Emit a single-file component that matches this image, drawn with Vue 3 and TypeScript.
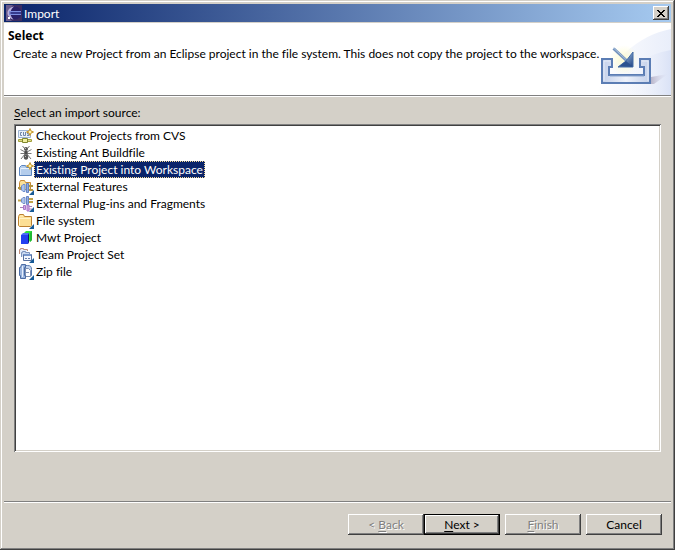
<script setup lang="ts">
import { ref } from 'vue'

interface ImportSource {
  id: string
  label: string
}

const sources: ImportSource[] = [
  { id: 'cvs', label: 'Checkout Projects from CVS' },
  { id: 'ant', label: 'Existing Ant Buildfile' },
  { id: 'project', label: 'Existing Project into Workspace' },
  { id: 'features', label: 'External Features' },
  { id: 'plugins', label: 'External Plug-ins and Fragments' },
  { id: 'folder', label: 'File system' },
  { id: 'mwt', label: 'Mwt Project' },
  { id: 'team', label: 'Team Project Set' },
  { id: 'zip', label: 'Zip file' },
]

const selected = ref('project')
</script>

<template>
  <main class="dialog">
    <header class="titlebar">
      <svg class="icon" viewBox="0 0 16 16" aria-hidden="true">
        <rect width="16" height="16" fill="#3b2d63" />
        <path d="M0 0h7L2 6v6l4 4H0z" fill="#6a5c8c" />
        <circle cx="9" cy="8" r="6.5" fill="#2a2168" />
        <path d="M8 1.500C4 2 1.500 5 1.500 8s2.500 6 6 6.500C5 12 4.500 10 4.500 8S5 4 8 1.500z" fill="#b9b0dc" />
        <path d="M3 6.500h12M3 9.500h12" stroke="#7d8fe0" />
        <path d="M3 8h12" stroke="#4557b4" />
        <path d="M2 12h2v2H2z" fill="#fff" />
      </svg>
      <h1>Import</h1>
      <button type="button" class="close" aria-label="Close">
        <svg viewBox="0 0 8 7" aria-hidden="true" shape-rendering="crispEdges">
          <path d="M0 0h2v1h1v1h2V1h1V0h2v1H7v1H6v1H5v1h1v1h1v1h1v1H6V6H5V5H3v1H2v1H0V6h1V5h1V4h1V3H2V2H1V1H0z" fill="#000" />
        </svg>
      </button>
    </header>

    <section class="banner">
      <div class="banner-text">
        <h2>Select</h2>
        <p>Create a new Project from an Eclipse project in the file system. This does not copy the project to the workspace.</p>
      </div>
      <svg class="banner-art" viewBox="0 0 75 72" aria-hidden="true">
        <defs>
          <linearGradient id="sky" x1="0" y1="0" x2="1" y2="0">
            <stop offset="0" stop-color="#fff" />
            <stop offset="1" stop-color="#e9eefa" />
          </linearGradient>
          <linearGradient id="sky2" x1="0" y1="0" x2="1" y2="0">
            <stop offset="0.200" stop-color="#fff" stop-opacity="0" />
            <stop offset="1" stop-color="#dae2f6" />
          </linearGradient>
          <linearGradient id="tray" x1="0" y1="0" x2="1" y2="0">
            <stop offset="0" stop-color="#c3d0ea" />
            <stop offset="0.500" stop-color="#eef2fb" />
            <stop offset="1" stop-color="#c3d0ea" />
          </linearGradient>
          <linearGradient id="head" x1="0" y1="0" x2="1" y2="1">
            <stop offset="0.300" stop-color="#8fb0d8" />
            <stop offset="1" stop-color="#1f4180" />
          </linearGradient>
          <radialGradient id="glow">
            <stop offset="0" stop-color="#fdfbd0" />
            <stop offset="1" stop-color="#fdfbd0" stop-opacity="0" />
          </radialGradient>
          <linearGradient id="shade" x1="0" y1="0" x2="1" y2="0">
            <stop offset="0" stop-color="#b9b5ca" />
            <stop offset="1" stop-color="#d9dbee" stop-opacity="0" />
          </linearGradient>
        </defs>
        <path d="M0 72C12 40 42 12 75 6v66z" fill="url(#sky)" />
        <path d="M14 72C26 46 50 31 75 27v45z" fill="url(#sky2)" />
        <path d="M55 54l17-3-14 10h-3z" fill="url(#shade)" />
        <circle cx="28" cy="37" r="15" fill="url(#glow)" />
        <path d="M6 36h10v8h-3v8h35v-8h-4v-8h10v24H6z" fill="url(#tray)" stroke="#5b7db4" stroke-width="2" />
        <path d="M8 38h6M46 38h6M8 38v20M52 38v20" stroke="#e5ecf8" fill="none" />
        <path d="M14 53h34" stroke="#8ba5cf" />
        <path d="M17.500 25.500L31 38" stroke="#7393be" stroke-width="3" />
        <path d="M17.500 25L30 36.500" stroke="#a7bedb" />
        <path d="M37 29v15H22l8-6z" fill="url(#head)" stroke="#456da6" />
        <path d="M36.500 43.500L30 38l-7 5.500z" fill="#2b528f" />
      </svg>
    </section>

    <section class="body">
      <h3 id="source-label"><u>S</u>elect an import source:</h3>
      <ul class="sources" aria-labelledby="source-label">
        <li v-for="source in sources" :key="source.id">
          <button
            type="button"
            class="source"
            :class="{ selected: source.id === selected }"
            :aria-pressed="source.id === selected"
            @click="selected = source.id"
          >
            <svg class="icon" viewBox="0 0 16 16" aria-hidden="true">
              <g v-if="source.id === 'cvs'">
                <path d="M.500 2.500h12v7H.500z" fill="#eaf1fa" stroke="#9db4d3" />
                <path d="M4 4.500H2.500v3H4M5.500 4v3.500h2V4M11 4.500H9.500V6H11v1.500H9" fill="none" stroke="#7187a8" />
                <path d="M.500 11.500h13v2H.500z" fill="#dcd98a" stroke="#a3a03c" />
                <path d="M4.500 10.500h5v4h-5z" fill="#f1efa0" stroke="#7f8730" />
              </g>
              <g v-else-if="source.id === 'ant'">
                <path d="M4.500 1l2 2.500M11.500 1l-2 2.500M2.500 4.500L7 7l1 1 1-1 4.500-2.500M2.500 8.500h11M3 14l4-5h2l4 5" fill="none" stroke="#777" />
                <circle cx="8" cy="4" r="2" fill="#555" />
                <circle cx="8" cy="7.500" r="1.700" fill="#4a4a4a" />
                <ellipse cx="8" cy="12" rx="2.200" ry="2.800" fill="#555" />
                <path d="M7 3.500h1M7 11.500h1" stroke="#bbb" />
              </g>
              <g v-else-if="source.id === 'project'">
                <path d="M1.500 13.500v-8l2-2h4l1 2h5v8z" fill="#b4cdec" stroke="#5c86c0" />
                <path d="M2.500 6.500h10" stroke="#e9f2fc" />
                <path d="M2.500 7v6" stroke="#d6e5f8" />
              </g>
              <g v-else-if="source.id === 'features'">
                <path d="M1.500 10.500v-7l1-2h4l1 2h5v7z" fill="#fbdf97" stroke="#c78a35" />
                <path d="M0 9h4M11 7h4M11 11h4" stroke="#b29542" stroke-width="2" />
                <path d="M7 5.500H5L3.500 7v4L5 12.500h2z" fill="#a9c2ec" stroke="#6f8ecb" />
                <path d="M8.500 4.500h2v9h-2z" fill="#8eaae0" stroke="#6483c2" />
              </g>
              <g v-else-if="source.id === 'plugins'">
                <path d="M0 4.500h4M11 3h4M11 6h4" stroke="#c0a34a" stroke-width="2" />
                <path d="M7 1.500H5L3.500 3v3L5 7.500h2z" fill="#a9c2ec" stroke="#7690c8" />
                <path d="M8.500.500h2v8h-2z" fill="#92aee2" stroke="#6885c4" />
                <path d="M2 11.500h3M11 10.500h3M11 13h3" stroke="#a97cba" />
                <path d="M5.500 9.500h2v4h-2zM9 9h2v6H9z" fill="#d3a9e2" stroke="#a877c8" />
              </g>
              <g v-else-if="source.id === 'folder'">
                <path d="M.500 12.500v-9l1-2h4l1 2h7v9l-1 1h-11z" fill="#fcdf94" stroke="#bd812f" />
                <path d="M1.500 5.500h11M1.500 5v7" stroke="#fff3c8" />
                <path d="M2 3h3" stroke="#fff0bd" />
              </g>
              <g v-else-if="source.id === 'mwt'">
                <path d="M6 3l2-2h6v9l-2 2z" fill="#2ee63c" />
                <path d="M14 1v9l-2 2V3z" fill="#22b834" />
                <path d="M3 5l2-2h6v9l-1 2H3z" fill="#4a6cf5" />
                <path d="M3 5h7v9H3z" fill="#2340f0" />
                <path d="M10 5l1-2v9l-1 2z" fill="#0c157a" />
              </g>
              <g v-else-if="source.id === 'team'">
                <path d="M1.500 7V2.500h1v-1h3v1h4V4" fill="#e3ebf8" stroke="#bf8d78" />
                <path d="M3.500 10V5.500h1v-1h3v1h4V7" fill="#c9d9f0" stroke="#7a92bd" />
                <path d="M5.500 13.500v-6h8v6z" fill="#f3f7fd" stroke="#58719f" />
                <path d="M6 8h7" stroke="#7696cc" stroke-width="2" />
                <path d="M7 11.500h2M10 11.500h2" stroke="#6a81ac" />
              </g>
              <g v-else>
                <path d="M7.500 1.500h2c3 0 4 1 4 4v6h-6z" fill="#c4d5ee" stroke="#5879b0" />
                <path d="M7.500 4.500h3l2 2v6h-5z" fill="#fff" stroke="#7d8fb2" />
                <path d="M3.500.500h4v3h-1v8h1v3h-5v-3h-1v-8h1z" fill="#9bb5de" stroke="#4b6ca4" />
                <path d="M4.500 2v11" stroke="#e7effb" />
                <path d="M8 8.500h3" stroke="#8798b8" />
              </g>
              <path
                v-if="source.id === 'cvs' || source.id === 'project'"
                d="M12 0.500l1 2.500 2.500 1-2.500 1-1 2.500-1-2.500-2.500-1 2.500-1z"
                fill="#fff3ac"
                stroke="#c5952c"
              />
              <path
                v-else-if="source.id !== 'ant' && source.id !== 'mwt'"
                d="M16 11v5h-5z"
                fill="#175a96"
              />
            </svg>
            <span class="source-name">{{ source.label }}</span>
          </button>
        </li>
      </ul>
    </section>

    <footer class="actions">
      <div class="paging">
        <button type="button" class="action" disabled>&lt; <u>B</u>ack</button>
        <button type="button" class="action default"><u>N</u>ext &gt;</button>
      </div>
      <button type="button" class="action" disabled><u>F</u>inish</button>
      <button type="button" class="action">Cancel</button>
    </footer>
  </main>
</template>

<style>
body {
  background: #d4d0c8;
}
</style>

<style scoped>
.dialog {
  box-sizing: border-box;
  min-height: 100vh;
  display: flex;
  flex-direction: column;
  padding: 4px;
  background: #d4d0c8;
  box-shadow:
    inset -1px -1px #404040,
    inset 1px 1px #d4d0c8,
    inset -2px -2px #808080,
    inset 2px 2px #fff;
  color: #000;
  font: 12px/17px Lato, "Liberation Sans", sans-serif;
  font-variant-ligatures: none;
}

h1,
h2,
h3,
p,
ul {
  margin: 0;
  padding: 0;
  font-size: 12px;
  font-weight: 400;
}

button {
  padding: 0;
  border: 0;
  background: none;
  color: inherit;
  font: inherit;
  font-variant-ligatures: none;
}

u {
  text-underline-offset: 2px;
}

.icon {
  flex: none;
  width: 16px;
  height: 16px;
}

.titlebar {
  display: flex;
  align-items: center;
  height: 18px;
  padding: 0 2px;
  margin-bottom: 1px;
  background: linear-gradient(to right, #0a246a, #a6caf0);
  color: #fff;
}

.titlebar h1 {
  flex: 1;
  margin-left: 2px;
}

.close {
  display: flex;
  align-items: center;
  justify-content: center;
  width: 16px;
  height: 14px;
  background: #d4d0c8;
  box-shadow:
    inset -1px -1px #404040,
    inset 1px 1px #fff,
    inset -2px -2px #808080;
}

.close svg {
  width: 8px;
  height: 7px;
}

.banner {
  display: flex;
  justify-content: space-between;
  height: 72px;
  background: #fff;
  border-bottom: 1px solid #808080;
  box-shadow: 0 1px #fff;
}

.banner-text {
  min-width: 0;
  padding: 4px 0 0 4px;
  white-space: nowrap;
}

.banner-text h2 {
  font: 700 12px/18px "Open Sans", sans-serif;
}

.banner-text p {
  padding-left: 5px;
}

.banner-art {
  flex: none;
  width: 75px;
  height: 72px;
}

.body {
  flex: 1;
  display: flex;
  flex-direction: column;
  padding: 8px 10px 49px;
}

.body h3 {
  margin-bottom: 3px;
}

.sources {
  flex: 1;
  padding: 3px 4px;
  background: #fff;
  box-shadow:
    inset 1px 1px #808080,
    inset -1px -1px #fff,
    inset 2px 2px #404040,
    inset -2px -2px #d4d0c8;
  list-style: none;
}

.source {
  display: flex;
  align-items: center;
  height: 17px;
}

.source-name {
  padding: 1px 2px 0;
  line-height: 16px;
}

.selected .source-name {
  padding: 1px 1px 0;
  border: 1px dotted #f5db95;
  line-height: 14px;
  background: #0a246a;
  color: #fff;
}

.actions {
  display: flex;
  justify-content: flex-end;
  gap: 5px;
  padding: 12px 9px 11px;
  border-top: 1px solid #808080;
  box-shadow: inset 0 1px #fff;
}

.paging {
  display: flex;
}

.action {
  width: 76px;
  height: 21px;
  background: #d4d0c8;
  box-shadow:
    inset -1px -1px #404040,
    inset 1px 1px #fff,
    inset -2px -2px #808080;
}

.action.default {
  box-shadow:
    inset 0 0 0 1px #000,
    inset -2px -2px #404040,
    inset 2px 2px #fff,
    inset -3px -3px #808080;
}

.action:disabled {
  color: #808080;
  text-shadow: 1px 1px #fff;
}
</style>
